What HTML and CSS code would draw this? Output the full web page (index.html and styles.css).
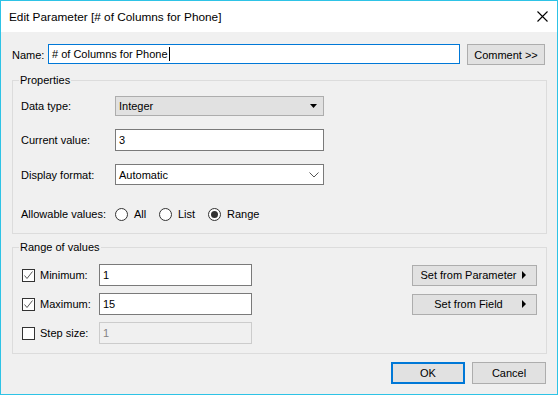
FILE: index.html
```html
<!DOCTYPE html>
<html>
<head>
<meta charset="utf-8">
<link rel="stylesheet" href="styles.css">
</head>
<body>
<div class="window">
  <div class="titlebar">
    <span class="title">Edit Parameter [# of Columns for Phone]</span>
    <svg class="close" width="11" height="11" viewBox="0 0 11 11"><path d="M0.5 0.5 L10.5 10.5 M10.5 0.5 L0.5 10.5" stroke="#000" stroke-width="1.1" fill="none"/></svg>
  </div>
  <div class="content">
    <div class="name-row">
      <span class="name-label">Name:</span>
      <div class="field focused name-field"><span>#&nbsp;of Columns for Phone</span><span class="caret"></span></div>
      <div class="btn comment-btn">Comment &gt;&gt;</div>
    </div>

    <fieldset class="group props">
      <legend>Properties</legend>
      <div class="prow r-type">
        <span class="plabel">Data type:</span>
        <div class="combo gray-combo"><span>Integer</span>
          <svg width="8" height="5" viewBox="0 0 8 5"><path d="M0 0 H7 L3.5 4 Z" fill="#000"/></svg>
        </div>
      </div>
      <div class="prow r-cur">
        <span class="plabel">Current value:</span>
        <div class="field wide"><span>3</span></div>
      </div>
      <div class="prow r-fmt">
        <span class="plabel">Display format:</span>
        <div class="combo white-combo"><span>Automatic</span>
          <svg width="10" height="6" viewBox="0 0 10 6"><path d="M0.5 0.5 L5 5 L9.5 0.5" stroke="#555" stroke-width="1" fill="none"/></svg>
        </div>
      </div>
      <div class="prow r-allow">
        <span class="plabel">Allowable values:</span>
        <div class="radios">
          <span class="radio"></span><span class="rlabel r-all">All</span>
          <span class="radio"></span><span class="rlabel r-list">List</span>
          <span class="radio checked"></span><span class="rlabel">Range</span>
        </div>
      </div>
    </fieldset>

    <fieldset class="group range">
      <legend>Range of values</legend>
      <div class="rrow">
        <span class="check"><svg width="11" height="11" viewBox="0 0 11 11"><path d="M1.5 5.5 L4 8.5 L9.5 1.5" stroke="#444" stroke-width="0.9" fill="none"/></svg></span>
        <span class="clabel">Minimum:</span>
        <div class="field short"><span>1</span></div>
        <div class="btn side-btn"><span class="side-text">Set from Parameter</span><svg width="5" height="8" viewBox="0 0 5 8"><path d="M0 0 L4 4 L0 8 Z" fill="#000"/></svg></div>
      </div>
      <div class="rrow">
        <span class="check"><svg width="11" height="11" viewBox="0 0 11 11"><path d="M1.5 5.5 L4 8.5 L9.5 1.5" stroke="#444" stroke-width="0.9" fill="none"/></svg></span>
        <span class="clabel">Maximum:</span>
        <div class="field short"><span>15</span></div>
        <div class="btn side-btn"><span class="side-text">Set from Field</span><svg width="5" height="8" viewBox="0 0 5 8"><path d="M0 0 L4 4 L0 8 Z" fill="#000"/></svg></div>
      </div>
      <div class="rrow">
        <span class="check"></span>
        <span class="clabel">Step size:</span>
        <div class="field short disabled"><span>1</span></div>
      </div>
    </fieldset>

    <div class="footer">
      <div class="btn ok-btn">OK</div>
      <div class="btn cancel-btn">Cancel</div>
    </div>
  </div>
</div>
</body>
</html>
```

FILE: styles.css
```css
* { box-sizing: border-box; }
html, body { margin: 0; padding: 0; }
body {
  width: 558px; height: 395px; overflow: hidden;
  background: #f0f0f0;
  font-family: "Liberation Sans", Arial, sans-serif;
  font-size: 11px; color: #000;
}
.window {
  width: 558px; height: 395px;
  border: 1px solid #2ec3e6;
  background: #f0f0f0;
  display: flex; flex-direction: column;
}
.titlebar {
  flex: none; height: 31px; background: #fff;
  display: flex; align-items: center;
  padding-left: 8px;
}
.title { font-size: 11.8px; }
.close { margin-left: auto; margin-right: 9px; }

.content {
  flex: 1;
  padding: 12px 10px 0 11px;
  display: flex; flex-direction: column;
}
.name-row { display: flex; align-items: center; height: 21px; }
.name-label { width: 36px; }
.field {
  background: #fff; border: 1px solid #7a7a7a;
  display: flex; align-items: center; padding-left: 3px;
  white-space: nowrap;
}
.field.focused { border-color: #0078d7; }
.name-field { width: 412px; height: 20px; align-self: flex-start; }
.caret { width: 1px; height: 14px; background: #000; margin-left: 1px; }
.btn {
  background: #e1e1e1; border: 1px solid #adadad;
  display: flex; align-items: center; justify-content: center;
}
.comment-btn { width: 78px; height: 21px; margin-left: 7px; }

.group {
  margin: 0; padding: 0 8px; min-width: 0;
  border: 1px solid #dcdcdc;
}
.group legend { margin-left: -2px; padding: 0 1px; line-height: 16px; }
.props { margin-top: 7px; padding-top: 8px; padding-bottom: 11px; }
.prow { display: flex; align-items: center; }
.plabel { width: 94px; }
.r-cur { margin-top: 13px; }
.r-fmt { margin-top: 13px; }
.r-allow { margin-top: 21px; height: 16px; }
.combo {
  width: 209px; display: flex; align-items: center;
  justify-content: space-between; padding: 0 4px 0 3px;
}
.gray-combo { height: 20px; background: #e1e1e1; border: 1px solid #adadad; }
.gray-combo svg { margin-right: 1px; }
.white-combo { height: 21px; background: #fff; border: 1px solid #7a7a7a; }
.wide { width: 209px; height: 22px; }
.radios { display: flex; align-items: center; }
.radio {
  width: 13px; height: 13px; border-radius: 50%;
  border: 1px solid #333; background: #fff;
  display: flex; align-items: center; justify-content: center;
}
.radio.checked::after {
  content: ""; width: 7px; height: 7px; border-radius: 50%; background: #333;
}
.rlabel { margin-left: 6px; }
.r-all { width: 25px; }
.r-list { width: 30px; }

.range { margin-top: 5px; padding-top: 9px; padding-bottom: 9px; padding-right: 9px; }
.rrow { display: flex; align-items: center; height: 22px; }
.rrow + .rrow { margin-top: 7px; }
.check {
  width: 13px; height: 13px; margin-left: 1px;
  border: 1px solid #333; background: #fff;
  display: flex; align-items: center; justify-content: center;
}
.clabel { margin-left: 5px; width: 59px; }
.short { width: 153px; height: 22px; }
.disabled { background: #f0f0f0; border-color: #cccccc; color: #838383; }
.side-btn {
  margin-left: auto; width: 125px; height: 21px;
  justify-content: flex-start; padding-right: 9px;
}
.side-text { flex: 1; text-align: center; padding-left: 2px; }

.footer {
  display: flex; justify-content: flex-end; gap: 7px;
  margin-top: 8px; padding-right: 1px;
}
.ok-btn { width: 74px; height: 22px; border: 2px solid #0078d7; }
.cancel-btn { width: 74px; height: 22px; }
```
